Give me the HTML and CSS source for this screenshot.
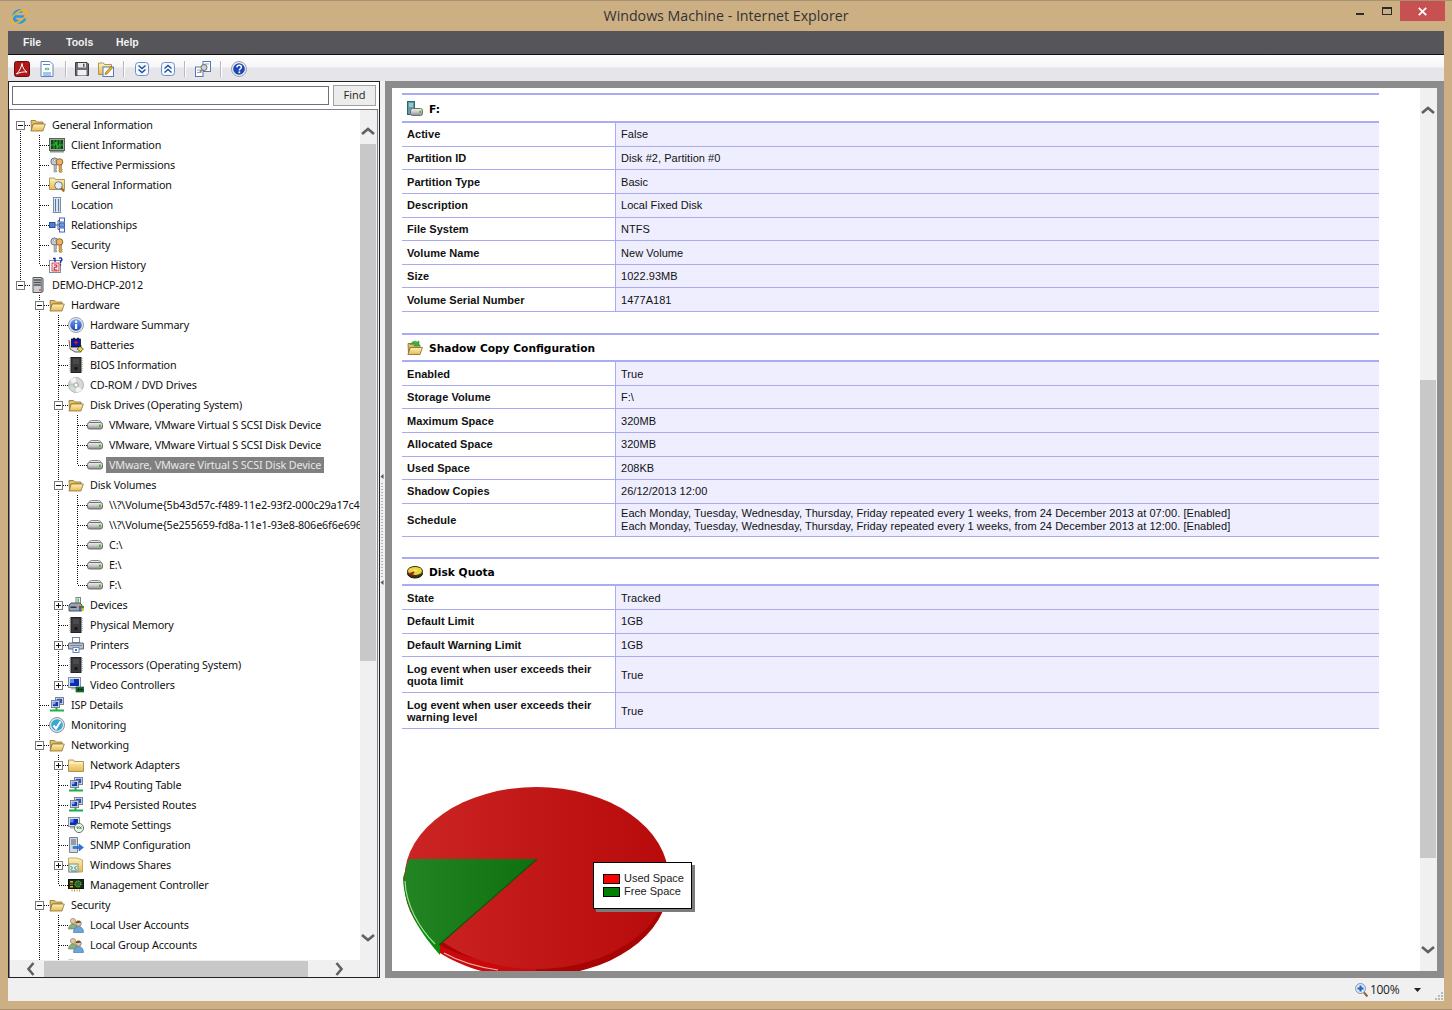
FILE: index.html
```html
<!DOCTYPE html>
<html lang="en">
<head>
<meta charset="utf-8">
<title>Windows Machine - Internet Explorer</title>
<link rel="stylesheet" href="styles.css">
</head>
<body>
<svg class="defs" width="0" height="0" aria-hidden="true">
  <defs>
    <linearGradient id="gFolder" x1="0" y1="0" x2="0" y2="1"><stop offset="0" stop-color="#fff2b8"/><stop offset="1" stop-color="#e8b850"/></linearGradient>
    <linearGradient id="gDisk" x1="0" y1="0" x2="0" y2="1"><stop offset="0" stop-color="#f2f2f2"/><stop offset=".5" stop-color="#c8c8c8"/><stop offset="1" stop-color="#8a8a8a"/></linearGradient>
    <linearGradient id="gBlue" x1="0" y1="0" x2="0" y2="1"><stop offset="0" stop-color="#6fa0ef"/><stop offset="1" stop-color="#1844b8"/></linearGradient>
    <linearGradient id="gPie" x1="0" y1="0" x2="1" y2="0"><stop offset="0" stop-color="#cc2424"/><stop offset="1" stop-color="#b80a0a"/></linearGradient>
    <linearGradient id="gGreen" x1="0" y1="0" x2="1" y2="0"><stop offset="0" stop-color="#238423"/><stop offset="1" stop-color="#0e700e"/></linearGradient>
    <symbol id="folderOpen" viewBox="0 0 16 16"><path d="M1 3.500h4.500l1.200 1.500H13v2H3L1.500 13z" fill="#e8c060" stroke="#8a7238" stroke-width=".8"/><path d="M3.300 7h12l-2.400 7H.9z" fill="url(#gFolder)" stroke="#8a7238" stroke-width=".8"/></symbol>
    <symbol id="folder" viewBox="0 0 16 16"><path d="M.5 3h5l1 1.500h9v10H.5z" fill="url(#gFolder)" stroke="#9a8240" stroke-width=".8"/><path d="M1 6h14" stroke="#fff6c8"/></symbol>
    <symbol id="client" viewBox="0 0 16 16"><rect x=".5" y="1.500" width="15" height="12" fill="#9aa89a" stroke="#58645a"/><rect x="2" y="3" width="12" height="9" fill="#0a4a14"/><path d="M2 8h4l1-3 1.500 6L10 8h4M5 3v9M8 3v9M11 3v9" stroke="#46d246" stroke-width=".7" fill="none"/><rect x="1" y="14" width="14" height="1.500" fill="#8a968a"/></symbol>
    <symbol id="keys" viewBox="0 0 16 16"><circle cx="5.500" cy="4.500" r="3.600" fill="#c8ccd0" stroke="#6c7078"/><circle cx="5.500" cy="3.500" r="1" fill="#fff" stroke="#6c7078" stroke-width=".5"/><path d="M5 8v7h2.500v-2H6.500v-1h1V8z" fill="#b8bcc0" stroke="#6c7078" stroke-width=".5"/><circle cx="10.500" cy="5" r="3.300" fill="#e8b468" stroke="#91642a"/><path d="M10 8v7l2 .5 1.500-1-1-1 1-1-1-1V8z" fill="#dc9c48" stroke="#91642a" stroke-width=".5"/></symbol>
    <symbol id="folderFind" viewBox="0 0 16 16"><path d="M.5 1h5l1 1.500h9v10H.5z" fill="url(#gFolder)" stroke="#9a8240" stroke-width=".8"/><circle cx="9.500" cy="8.500" r="3.800" fill="#e4eefa" stroke="#6a7888"/><path d="M12.200 11.300l3 3.200" stroke="#a06a28" stroke-width="2"/></symbol>
    <symbol id="location" viewBox="0 0 16 16"><path d="M4 .5h8l-.5 1v13l.5 1H4l.5-1v-13z" fill="#dfe8f4" stroke="#7a8ca4"/><path d="M6.500 2v12.500M9.500 2v12.500" stroke="#5878a8" stroke-width="1.100"/></symbol>
    <symbol id="rel" viewBox="0 0 16 16"><path d="M6 8h3M9 3.500v9M9 3.500h2M9 8h2M9 12.500h2" stroke="#586878" fill="none"/><rect x=".5" y="5.500" width="5.500" height="5" fill="#4a7ee0" stroke="#2a4e9c"/><rect x="10.500" y="1" width="5" height="4" fill="#fff" stroke="#3a64b8"/><rect x="10.500" y="6" width="5" height="4" fill="#6a9aee" stroke="#3a64b8"/><rect x="10.500" y="11" width="5" height="4" fill="#fff" stroke="#3a64b8"/></symbol>
    <symbol id="version" viewBox="0 0 16 16"><rect x=".5" y="3.500" width="11" height="12" fill="#fff" stroke="#7c8ca0"/><rect x="3" y="6" width="7" height="8" fill="#eef" stroke="#c00" stroke-width=".7"/><path d="M5 8h2.800v2.200H5.200V13h3" stroke="#c81010" fill="none"/><path d="M4 1.500h2V5M10 1.200c3-1 4 2 1.500 3.200V6M11.500 7.200v1.200" stroke="#1428a8" stroke-width="1.300" fill="none"/></symbol>
    <symbol id="server" viewBox="0 0 16 16"><path d="M3 .5h8.500l1.500 1v13l-1.500 1H3z" fill="#cfd0d4" stroke="#55565a"/><path d="M4 3h7.500M4 5.500h7.500M4 8h7.500" stroke="#4c4d52" stroke-width="1.300"/><rect x="9" y="12.500" width="2" height="1" fill="#d01010"/><path d="M11.500 1v14" stroke="#8a8b90" stroke-width="1.400"/></symbol>
    <symbol id="info" viewBox="0 0 16 16"><circle cx="8" cy="8" r="7.500" fill="#e6e9ee" stroke="#9aa0a8"/><circle cx="8" cy="8" r="5.800" fill="url(#gBlue)"/><rect x="7" y="7" width="2.200" height="5" fill="#fff"/><circle cx="8.100" cy="4.800" r="1.200" fill="#fff"/></symbol>
    <symbol id="battery" viewBox="0 0 16 16"><path d="M1 3l1 9 5 3h6V8" fill="#dcdcdc" stroke="#444" stroke-width=".8"/><rect x="3.500" y="2" width="9" height="8" fill="#0a18a8" stroke="#000" stroke-width=".7"/><rect x="5" y=".8" width="2" height="1.200" fill="#222"/><rect x="9" y=".8" width="2" height="1.200" fill="#222"/><path d="M8 3.500v4M6 5.500h4" stroke="#e81818" stroke-width="1.200"/><path d="M9 12l3-2.500 3.500 2.500-3 2.500z" fill="#e8e020" stroke="#444" stroke-width=".7"/></symbol>
    <symbol id="chip" viewBox="0 0 16 16"><rect x="3" y=".5" width="10" height="15" fill="#3a3a3c" stroke="#222"/><rect x="5" y="2" width="6" height="5" fill="#4a4a4e"/><rect x="6.500" y="10" width="3" height="3" fill="#17171a"/><path d="M1.500 1.500h1.500M1.500 3.500h1.500M1.500 5.500h1.500M1.500 7.500h1.500M1.500 9.500h1.500M1.500 11.500h1.500M1.500 13.500h1.500M13 1.500h1.500M13 3.500h1.500M13 5.500h1.500M13 7.500h1.500M13 9.500h1.500M13 11.500h1.500M13 13.500h1.500" stroke="#8a8a8a"/></symbol>
    <symbol id="cd" viewBox="0 0 16 16"><circle cx="8" cy="8" r="7.500" fill="#d8d8d8" stroke="#b4b4b4"/><path d="M8 8L2 3.500A7.500 7.500 0 0 1 8 .5zM8 8l6 4.500A7.500 7.500 0 0 1 8 15.500z" fill="#f4f4f4"/><path d="M8 8L1 6.500 1.200 9z" fill="#a8d8a8"/><circle cx="8" cy="8" r="2.200" fill="#fff" stroke="#9c9c9c"/></symbol>
    <symbol id="disk" viewBox="0 0 16 16"><path d="M2 6c0-1.500 1-2.500 2.500-2.500h7C13 3.500 14 4.500 14 6" fill="#e8e8e8" stroke="#8a8a8a"/><rect x=".5" y="5.500" width="15" height="6.500" rx="2" fill="url(#gDisk)" stroke="#6e6e6e"/><rect x="12" y="7.500" width="1.800" height="2.500" fill="#40c020"/></symbol>
    <symbol id="devices" viewBox="0 0 16 16"><rect x="8" y=".5" width="4.500" height="7" fill="#eee" stroke="#7a8a7a"/><rect x="9.500" y="1.500" width="1.500" height="4" fill="#68b868"/><path d="M1 8l2-2h9l2 2v6H1z" fill="#98a4b0" stroke="#48545e"/><rect x="2.500" y="9.500" width="6" height="1.500" fill="#2a3640"/><rect x="11" y="9" width="2.500" height="2.500" fill="#e02020"/><rect x="13.500" y="9" width="2.500" height="2.500" fill="#20a020"/><rect x="11" y="11.500" width="2.500" height="2.500" fill="#2060e0"/><rect x="13.500" y="11.500" width="2.500" height="2.500" fill="#f0c820"/></symbol>
    <symbol id="printer" viewBox="0 0 16 16"><rect x="4.500" y=".5" width="7" height="5" fill="#fff" stroke="#7888a0"/><path d="M1 6h14l.5 1v5h-15V7z" fill="#b8c0cc" stroke="#5c6878"/><rect x="2" y="8" width="12" height="1" fill="#7c8898"/><rect x="5" y="10.500" width="6" height="5" fill="#fff" stroke="#6a88b8"/><rect x="7" y="12" width="2" height="2" fill="#3a78d8"/></symbol>
    <symbol id="video" viewBox="0 0 16 16"><rect x=".5" y=".5" width="12" height="10" fill="#dfe3e8" stroke="#88909a"/><rect x="2" y="2" width="9" height="7" fill="#0c2cb4"/><path d="M2 2h4v4H2z" fill="#5c8cf0"/><rect x="3" y="11" width="7" height="1.500" fill="#b4bac0"/><rect x="8" y="10" width="8" height="5" fill="#147a3c" stroke="#0a4a24" stroke-width=".6"/><path d="M9 15.500h6" stroke="#d8c040" stroke-dasharray="1 1"/><rect x="9.500" y="11.500" width="2" height="2" fill="#111"/><rect x="12.500" y="11.500" width="2" height="2" fill="#111"/></symbol>
    <symbol id="network" viewBox="0 0 16 16"><rect x="6.500" y=".5" width="8" height="7" fill="#dce2ea" stroke="#7a8490"/><rect x="7.800" y="1.800" width="5.400" height="4.400" fill="#2a50c8"/><rect x="2.500" y="3.500" width="8" height="7" fill="#e4e8ee" stroke="#7a8490"/><rect x="3.800" y="4.800" width="5.400" height="4.400" fill="#1838b0"/><path d="M4 4.800h2.500v2.500H4z" fill="#80a8f0"/><path d="M7.500 10.500v2.500M1 13.500h14" stroke="#1eb04a" stroke-width="2"/></symbol>
    <symbol id="check" viewBox="0 0 16 16"><circle cx="8" cy="8" r="7.500" fill="#dfe6ea" stroke="#8c969e"/><circle cx="8" cy="8" r="5.800" fill="#38a8d0"/><path d="M4.500 8.500L7 11.500 11.500 4.500" stroke="#fff" stroke-width="2" fill="none"/></symbol>
    <symbol id="remote" viewBox="0 0 16 16"><rect x=".5" y=".5" width="11" height="9" fill="#dfe3e8" stroke="#88909a"/><rect x="2" y="2" width="8" height="6" fill="#0c2cb4"/><path d="M2 2h3.500v3.500H2z" fill="#5c8cf0"/><rect x="2" y="10" width="8" height="1.500" fill="#aeb4ba"/><circle cx="11" cy="11" r="4.600" fill="#eef2ee" stroke="#6c746c"/><path d="M8.500 10h2l-1 2M11.500 12l2-2.500M11.500 9.500l2 2.500" stroke="#1a9a2a" fill="none"/></symbol>
    <symbol id="snmp" viewBox="0 0 16 16"><path d="M1.500.5h8v15h-8z" fill="#d4dae2" stroke="#78828e"/><path d="M3 3h5M3 5h5M3 7h5" stroke="#546072"/><path d="M5 9.500h6V7l4.500 3.500L11 14v-2.500H5z" fill="#2a78e0" stroke="#1a58b0" stroke-width=".5"/></symbol>
    <symbol id="shares" viewBox="0 0 16 16"><path d="M.5 1h8l6 2v12H.5z" fill="url(#gFolder)" stroke="#b09a50" stroke-width=".8"/><rect x="1" y="7" width="9" height="8" fill="#e4ecdc" stroke="#6a88a0" stroke-width=".8"/><path d="M2.500 9l2 2-2 2M8.500 9l-2 2 2 2" stroke="#2a8a48" fill="none"/><path d="M3 14h6" stroke="#3a78c0"/></symbol>
    <symbol id="mgmt" viewBox="0 0 16 16"><rect x=".5" y="2.500" width="15" height="9" fill="#14301c" stroke="#0a180e"/><rect x="2" y="4" width="3" height="1.500" fill="#d8b820"/><rect x="2" y="6.500" width="3" height="1.500" fill="#d04020"/><rect x="2" y="9" width="3" height="1.500" fill="#d8b820"/><circle cx="10" cy="7" r="3" fill="#1a6a2c" stroke="#e0c820" stroke-dasharray="1 1"/><path d="M4 12.500v2M6.500 12.500v2M9 12.500v2M11.500 12.500v2" stroke="#c0a020"/></symbol>
    <symbol id="users" viewBox="0 0 16 16"><circle cx="5" cy="4" r="2.600" fill="#e8c8a0" stroke="#8a6e50" stroke-width=".6"/><path d="M.5 12c0-3 2-5 4.500-5s4.500 2 4.500 5z" fill="#8cb07c" stroke="#5c7a50" stroke-width=".6"/><circle cx="10.500" cy="6.500" r="2.800" fill="#e8c49c" stroke="#6e5238" stroke-width=".6"/><path d="M10.500 4c-2 0-2.500 1-2.500 2 1 0 3-.5 5-.3-.5-1-1.200-1.700-2.500-1.700z" fill="#5a4028"/><path d="M5.500 15.500c0-3.500 2-6 5-6s5 2.500 5 6z" fill="#6ca4dc" stroke="#3a6ea8" stroke-width=".6"/></symbol>
    <symbol id="driveInfo" viewBox="0 0 16 16"><rect x=".5" y=".5" width="7" height="13" fill="#5e9ca8" stroke="#2e6670"/><path d="M2 3h4M2 5h4" stroke="#d4eef2"/><rect x="3.500" y="7.500" width="12" height="7" rx="2" fill="url(#gDisk)" stroke="#6e6e6e"/><rect x="12.500" y="9.500" width="1.800" height="2.600" fill="#40c020"/></symbol>
    <symbol id="shadow" viewBox="0 0 16 16"><path d="M1 3.500h4.500l1 1.500H13v2.500H3L1.500 13z" fill="#e0be62" stroke="#7e6830" stroke-width=".8"/><path d="M3.300 7.500h12.200l-2.500 7H.9z" fill="url(#gFolder)" stroke="#7e6830" stroke-width=".8"/><path d="M3.500 4.500C5 1.500 8 .5 10.500 2L12 .8V6H7l1.500-1.500C7.200 3.600 5.500 3.800 3.500 4.500z" fill="#3cb43c" stroke="#1e7c1e" stroke-width=".5"/></symbol>
    <symbol id="quota" viewBox="0 0 16 16"><ellipse cx="8" cy="9.500" rx="7.500" ry="4.500" fill="#3c3014" stroke="#1a1608"/><ellipse cx="8" cy="7" rx="7.500" ry="4.500" fill="#e8d83c" stroke="#3a3210"/><path d="M8 7L1.500 9.200A7.500 4.500 0 0 0 6 11.300z" fill="#b02418"/><ellipse cx="8" cy="6.600" rx="2" ry="1" fill="#f4ec90"/></symbol>
  </defs>
</svg>

<div class="window">
  <header class="titlebar">
    <div class="title-left">
      <svg class="ie" viewBox="0 0 18 18"><circle cx="9.500" cy="9.500" r="5.600" fill="none" stroke="#2a96e4" stroke-width="3.200" stroke-dasharray="27 8" transform="rotate(18 9.500 9.500)"/><rect x="5" y="8.300" width="9.500" height="2.400" fill="#2a96e4"/><ellipse cx="9" cy="9.500" rx="9" ry="4.300" transform="rotate(-38 9 9.500)" fill="none" stroke="#f0b428" stroke-width="1.500"/></svg>
    </div>
    <div class="title-text">Windows Machine - Internet Explorer</div>
    <div class="win-controls">
      <span class="win-min"></span>
      <span class="win-max"></span>
      <span class="win-close"><svg viewBox="0 0 9 9" width="9" height="9"><path d="M.8.8l7.400 7.400M8.200.8L.8 8.200" stroke="#fff" stroke-width="1.800"/></svg></span>
    </div>
  </header>

  <nav class="menubar">
    <span class="menu-item m-file">File</span>
    <span class="menu-item m-tools">Tools</span>
    <span class="menu-item">Help</span>
  </nav>

  <div class="toolbar">
    <svg class="tb tb-pdf" viewBox="0 0 16 16"><rect x=".5" y=".5" width="15" height="15" rx="2" fill="#b01818" stroke="#6c0c0c"/><path d="M8 2.500c-.5 3-2.500 8-5.500 10.500 3-1.500 7-2.500 10.500-2-2.500-1-4.500-4.500-5-8.500z" fill="none" stroke="#fff" stroke-width="1"/></svg>
    <svg class="tb tb-doc" viewBox="0 0 14 16"><path d="M1 .5h9l3 3v12H1z" fill="#fff" stroke="#5a86b8"/><path d="M3 3.500h7M3 12h8M3 14h8" stroke="#4a8ad8"/><path d="M4.500 8l2-1.500v3zM9.500 8l-2-1.500v3z" fill="#2a9a5a"/></svg>
    <span class="tb-sep s1"></span>
    <svg class="tb tb-save" viewBox="0 0 14 14"><path d="M.5.500h11.500L13.500 2v11.500H.5z" fill="#6e6e72" stroke="#3e3e42"/><rect x="3" y="1" width="8" height="4.500" fill="#e8e8ec"/><rect x="8" y="1.800" width="1.500" height="3" fill="#55555a"/><rect x="2.500" y="8" width="9" height="5.500" fill="#f2f2f2"/></svg>
    <svg class="tb tb-edit" viewBox="0 0 16 16"><path d="M.5 2h5l1 1.500h7v10H.5z" fill="url(#gFolder)" stroke="#9a8240" stroke-width=".8"/><rect x="5" y="6" width="10.500" height="9.500" fill="#f8fbff" stroke="#5a7ab0"/><path d="M7 13.500l.5-2L13 5.500l1.500 1.500-5.500 6z" fill="#f0b020" stroke="#805a10" stroke-width=".6"/></svg>
    <span class="tb-sep s2"></span>
    <svg class="tb tb-exp" viewBox="0 0 14 14"><rect x=".5" y=".5" width="13" height="13" rx="3" fill="#f4f8ff" stroke="#6c90c0"/><path d="M3.500 3.500L7 6.500l3.500-3M3.500 7.500L7 10.500l3.500-3" fill="none" stroke="#1c4f9c" stroke-width="1.400"/></svg>
    <svg class="tb tb-col" viewBox="0 0 14 14"><rect x=".5" y=".5" width="13" height="13" rx="3" fill="#f4f8ff" stroke="#6c90c0"/><path d="M3.500 6.500L7 3.500l3.500 3M3.500 10.500L7 7.500l3.500 3" fill="none" stroke="#1c4f9c" stroke-width="1.400"/></svg>
    <span class="tb-sep s3"></span>
    <svg class="tb tb-find" viewBox="0 0 16 16"><rect x="8" y=".5" width="7.500" height="10" fill="#fff" stroke="#5878b0"/><rect x=".5" y="6" width="7.500" height="9.500" fill="#fff" stroke="#5878b0"/><path d="M9.500 3h4.500M2 9h4.500M2 11.500h4.500" stroke="#88a8d8"/><circle cx="9" cy="6.500" r="3" fill="#bcd8f4" stroke="#7a6840"/><path d="M6.800 9L5 11" stroke="#a87830" stroke-width="1.500"/></svg>
    <span class="tb-sep s4"></span>
    <svg class="tb tb-help" viewBox="0 0 16 16"><circle cx="8" cy="8" r="7.500" fill="#e8ecf2" stroke="#9ca4b0"/><circle cx="8" cy="8" r="5.800" fill="#1c46b8"/><path d="M5.800 6.300C6 4.800 7 4.200 8.200 4.200c1.400 0 2.200.9 2.200 2 0 1.500-2 1.700-2 3.200" fill="none" stroke="#fff" stroke-width="1.500"/><rect x="7.500" y="10.400" width="1.700" height="1.700" fill="#fff"/></svg>
  </div>

  <main class="main">
    <aside class="left">
      <form class="findbar">
        <input class="find-input" type="text" aria-label="Find">
        <button class="find-btn" type="button">Find</button>
      </form>
      <div class="tree-frame">
        <div class="tree">
          <div class="row"><i class="c d"><b class="box minus"></b></i><svg class="ic"><use href="#folderOpen"/></svg><span class="lbl">General Information</span></div>
          <div class="row"><i class="c v"></i><i class="c t"></i><svg class="ic"><use href="#client"/></svg><span class="lbl">Client Information</span></div>
          <div class="row"><i class="c v"></i><i class="c t"></i><svg class="ic"><use href="#keys"/></svg><span class="lbl">Effective Permissions</span></div>
          <div class="row"><i class="c v"></i><i class="c t"></i><svg class="ic"><use href="#folderFind"/></svg><span class="lbl">General Information</span></div>
          <div class="row"><i class="c v"></i><i class="c t"></i><svg class="ic"><use href="#location"/></svg><span class="lbl">Location</span></div>
          <div class="row"><i class="c v"></i><i class="c t"></i><svg class="ic"><use href="#rel"/></svg><span class="lbl">Relationships</span></div>
          <div class="row"><i class="c v"></i><i class="c t"></i><svg class="ic"><use href="#keys"/></svg><span class="lbl">Security</span></div>
          <div class="row"><i class="c v"></i><i class="c l"></i><svg class="ic"><use href="#version"/></svg><span class="lbl">Version History</span></div>
          <div class="row"><i class="c l"><b class="box minus"></b></i><svg class="ic"><use href="#server"/></svg><span class="lbl">DEMO-DHCP-2012</span></div>
          <div class="row"><i class="c"></i><i class="c t"><b class="box minus"></b></i><svg class="ic"><use href="#folderOpen"/></svg><span class="lbl">Hardware</span></div>
          <div class="row"><i class="c"></i><i class="c v"></i><i class="c t"></i><svg class="ic"><use href="#info"/></svg><span class="lbl">Hardware Summary</span></div>
          <div class="row"><i class="c"></i><i class="c v"></i><i class="c t"></i><svg class="ic"><use href="#battery"/></svg><span class="lbl">Batteries</span></div>
          <div class="row"><i class="c"></i><i class="c v"></i><i class="c t"></i><svg class="ic"><use href="#chip"/></svg><span class="lbl">BIOS Information</span></div>
          <div class="row"><i class="c"></i><i class="c v"></i><i class="c t"></i><svg class="ic"><use href="#cd"/></svg><span class="lbl">CD-ROM / DVD Drives</span></div>
          <div class="row"><i class="c"></i><i class="c v"></i><i class="c t"><b class="box minus"></b></i><svg class="ic"><use href="#folderOpen"/></svg><span class="lbl">Disk Drives (Operating System)</span></div>
          <div class="row"><i class="c"></i><i class="c v"></i><i class="c v"></i><i class="c t"></i><svg class="ic"><use href="#disk"/></svg><span class="lbl">VMware, VMware Virtual S SCSI Disk Device</span></div>
          <div class="row"><i class="c"></i><i class="c v"></i><i class="c v"></i><i class="c t"></i><svg class="ic"><use href="#disk"/></svg><span class="lbl">VMware, VMware Virtual S SCSI Disk Device</span></div>
          <div class="row"><i class="c"></i><i class="c v"></i><i class="c v"></i><i class="c l"></i><svg class="ic"><use href="#disk"/></svg><span class="lbl selected">VMware, VMware Virtual S SCSI Disk Device</span></div>
          <div class="row"><i class="c"></i><i class="c v"></i><i class="c t"><b class="box minus"></b></i><svg class="ic"><use href="#folderOpen"/></svg><span class="lbl">Disk Volumes</span></div>
          <div class="row"><i class="c"></i><i class="c v"></i><i class="c v"></i><i class="c t"></i><svg class="ic"><use href="#disk"/></svg><span class="lbl">\\?\Volume{5b43d57c-f489-11e2-93f2-000c29a17c4f}\</span></div>
          <div class="row"><i class="c"></i><i class="c v"></i><i class="c v"></i><i class="c t"></i><svg class="ic"><use href="#disk"/></svg><span class="lbl">\\?\Volume{5e255659-fd8a-11e1-93e8-806e6f6e6963}\</span></div>
          <div class="row"><i class="c"></i><i class="c v"></i><i class="c v"></i><i class="c t"></i><svg class="ic"><use href="#disk"/></svg><span class="lbl">C:\</span></div>
          <div class="row"><i class="c"></i><i class="c v"></i><i class="c v"></i><i class="c t"></i><svg class="ic"><use href="#disk"/></svg><span class="lbl">E:\</span></div>
          <div class="row"><i class="c"></i><i class="c v"></i><i class="c v"></i><i class="c l"></i><svg class="ic"><use href="#disk"/></svg><span class="lbl">F:\</span></div>
          <div class="row"><i class="c"></i><i class="c v"></i><i class="c t"><b class="box plus"></b></i><svg class="ic"><use href="#devices"/></svg><span class="lbl">Devices</span></div>
          <div class="row"><i class="c"></i><i class="c v"></i><i class="c t"></i><svg class="ic"><use href="#chip"/></svg><span class="lbl">Physical Memory</span></div>
          <div class="row"><i class="c"></i><i class="c v"></i><i class="c t"><b class="box plus"></b></i><svg class="ic"><use href="#printer"/></svg><span class="lbl">Printers</span></div>
          <div class="row"><i class="c"></i><i class="c v"></i><i class="c t"></i><svg class="ic"><use href="#chip"/></svg><span class="lbl">Processors (Operating System)</span></div>
          <div class="row"><i class="c"></i><i class="c v"></i><i class="c l"><b class="box plus"></b></i><svg class="ic"><use href="#video"/></svg><span class="lbl">Video Controllers</span></div>
          <div class="row"><i class="c"></i><i class="c t"></i><svg class="ic"><use href="#network"/></svg><span class="lbl">ISP Details</span></div>
          <div class="row"><i class="c"></i><i class="c t"></i><svg class="ic"><use href="#check"/></svg><span class="lbl">Monitoring</span></div>
          <div class="row"><i class="c"></i><i class="c t"><b class="box minus"></b></i><svg class="ic"><use href="#folderOpen"/></svg><span class="lbl">Networking</span></div>
          <div class="row"><i class="c"></i><i class="c v"></i><i class="c t"><b class="box plus"></b></i><svg class="ic"><use href="#folder"/></svg><span class="lbl">Network Adapters</span></div>
          <div class="row"><i class="c"></i><i class="c v"></i><i class="c t"></i><svg class="ic"><use href="#network"/></svg><span class="lbl">IPv4 Routing Table</span></div>
          <div class="row"><i class="c"></i><i class="c v"></i><i class="c t"></i><svg class="ic"><use href="#network"/></svg><span class="lbl">IPv4 Persisted Routes</span></div>
          <div class="row"><i class="c"></i><i class="c v"></i><i class="c t"></i><svg class="ic"><use href="#remote"/></svg><span class="lbl">Remote Settings</span></div>
          <div class="row"><i class="c"></i><i class="c v"></i><i class="c t"></i><svg class="ic"><use href="#snmp"/></svg><span class="lbl">SNMP Configuration</span></div>
          <div class="row"><i class="c"></i><i class="c v"></i><i class="c t"><b class="box plus"></b></i><svg class="ic"><use href="#shares"/></svg><span class="lbl">Windows Shares</span></div>
          <div class="row"><i class="c"></i><i class="c v"></i><i class="c l"></i><svg class="ic"><use href="#mgmt"/></svg><span class="lbl">Management Controller</span></div>
          <div class="row"><i class="c"></i><i class="c t"><b class="box minus"></b></i><svg class="ic"><use href="#folderOpen"/></svg><span class="lbl">Security</span></div>
          <div class="row"><i class="c"></i><i class="c v"></i><i class="c t"></i><svg class="ic"><use href="#users"/></svg><span class="lbl">Local User Accounts</span></div>
          <div class="row"><i class="c"></i><i class="c v"></i><i class="c t"></i><svg class="ic"><use href="#users"/></svg><span class="lbl">Local Group Accounts</span></div>
          <div class="row"><i class="c"></i><i class="c v"></i><i class="c t"></i><svg class="ic"><use href="#folder"/></svg></div>
        </div>
        <div class="vbar">
          <svg class="chev" viewBox="0 0 14 8"><path d="M1 7l6-5 6 5" fill="none" stroke="#606060" stroke-width="2.600"/></svg>
          <div class="vthumb vthumb-left"></div>
          <svg class="chev chev-end" viewBox="0 0 14 8"><path d="M1 1l6 5 6-5" fill="none" stroke="#606060" stroke-width="2.600"/></svg>
        </div>
        <div class="hbar">
          <svg class="chev-h" viewBox="0 0 8 14"><path d="M7 1L2 7l5 6" fill="none" stroke="#606060" stroke-width="2.600"/></svg>
          <div class="hthumb"></div>
          <svg class="chev-h chev-h-end" viewBox="0 0 8 14"><path d="M1 1l5 6-5 6" fill="none" stroke="#606060" stroke-width="2.600"/></svg>
        </div>
        <div class="corner"></div>
      </div>
    </aside>

    <div class="splitter">
      <svg width="5" height="112" viewBox="0 0 5 112"><path d="M3.500 0v5L.5 2.500z" fill="#555"/><path d="M2 9v94" stroke="#777" stroke-dasharray="1 2" fill="none"/><path d="M3.500 106v5L.5 108.500z" fill="#555"/></svg>
    </div>

    <section class="right">
      <div class="doc">
        <div class="content">
          <div class="sect sect-a">
            <h2 class="sect-head"><svg class="sect-ic"><use href="#driveInfo"/></svg>F:</h2>
            <div class="kv"><div class="k">Active</div><div class="val">False</div></div>
            <div class="kv"><div class="k">Partition ID</div><div class="val">Disk #2, Partition #0</div></div>
            <div class="kv"><div class="k">Partition Type</div><div class="val">Basic</div></div>
            <div class="kv"><div class="k">Description</div><div class="val">Local Fixed Disk</div></div>
            <div class="kv"><div class="k">File System</div><div class="val">NTFS</div></div>
            <div class="kv"><div class="k">Volume Name</div><div class="val">New Volume</div></div>
            <div class="kv"><div class="k">Size</div><div class="val">1022.93MB</div></div>
            <div class="kv"><div class="k">Volume Serial Number</div><div class="val">1477A181</div></div>
          </div>
          <div class="sect sect-b">
            <h2 class="sect-head"><svg class="sect-ic"><use href="#shadow"/></svg>Shadow Copy Configuration</h2>
            <div class="kv"><div class="k">Enabled</div><div class="val">True</div></div>
            <div class="kv"><div class="k">Storage Volume</div><div class="val">F:\</div></div>
            <div class="kv"><div class="k">Maximum Space</div><div class="val">320MB</div></div>
            <div class="kv"><div class="k">Allocated Space</div><div class="val">320MB</div></div>
            <div class="kv"><div class="k">Used Space</div><div class="val">208KB</div></div>
            <div class="kv"><div class="k">Shadow Copies</div><div class="val">26/12/2013 12:00</div></div>
            <div class="kv tall"><div class="k">Schedule</div><div class="val">Each Monday, Tuesday, Wednesday, Thursday, Friday repeated every 1 weeks, from 24 December 2013 at 07:00. [Enabled]<br>Each Monday, Tuesday, Wednesday, Thursday, Friday repeated every 1 weeks, from 24 December 2013 at 12:00. [Enabled]</div></div>
          </div>
          <div class="sect sect-c">
            <h2 class="sect-head"><svg class="sect-ic"><use href="#quota"/></svg>Disk Quota</h2>
            <div class="kv"><div class="k">State</div><div class="val">Tracked</div></div>
            <div class="kv"><div class="k">Default Limit</div><div class="val">1GB</div></div>
            <div class="kv"><div class="k">Default Warning Limit</div><div class="val">1GB</div></div>
            <div class="kv taller"><div class="k">Log event when user exceeds their quota limit</div><div class="val">True</div></div>
            <div class="kv taller"><div class="k">Log event when user exceeds their warning level</div><div class="val">True</div></div>
          </div>
          <div class="chart">
            <svg class="pie" viewBox="0 0 300 243" width="300" height="243">
              <ellipse cx="134.500" cy="156" rx="132" ry="91" fill="#a80404"/>
              <path d="M6 132L1 149C2 180 20 206 38 226L38 216z" fill="#0d8a0d"/>
              <path d="M38 216L38 224C70 244 110 250 134 250V236C95 236 62 230 38 216z" fill="#c80a0a"/>
              <ellipse cx="134.500" cy="149" rx="132" ry="91" fill="url(#gPie)"/>
              <path d="M135 130H7C3 139 3 146 3 149 3 173 15 197 37 216z" fill="url(#gGreen)"/>
              <path d="M135 130L37 216" stroke="#0a560a" stroke-width="1.200" fill="none"/>
              <path d="M3 152C4 176 17 199 33 215" stroke="#9be09b" stroke-width="1.200" fill="none"/>
              <path d="M42 224C58 233 76 238 96 241" stroke="#f6b0b0" stroke-width="1.200" fill="none"/>
            </svg>
            <div class="legend">
              <div class="leg-row"><span class="swatch sw-red"></span>Used Space</div>
              <div class="leg-row"><span class="swatch sw-green"></span>Free Space</div>
            </div>
          </div>
        </div>
        <div class="vbar vbar-right">
          <svg class="chev" viewBox="0 0 14 8"><path d="M1 7l6-5 6 5" fill="none" stroke="#606060" stroke-width="2.600"/></svg>
          <div class="vthumb vthumb-right"></div>
          <svg class="chev chev-end" viewBox="0 0 14 8"><path d="M1 1l6 5 6-5" fill="none" stroke="#606060" stroke-width="2.600"/></svg>
        </div>
      </div>
    </section>
  </main>

  <footer class="statusbar">
    <svg class="zoom-ic" viewBox="0 0 13 14"><circle cx="5.500" cy="5.500" r="5" fill="#dce8f8" stroke="#8a94a4"/><path d="M5.500 2.500v6M2.500 5.500h6" stroke="#1a64c8" stroke-width="2"/><path d="M9 9.500l3.500 4" stroke="#94602c" stroke-width="2"/></svg>
    <span class="zoom-val">100%</span>
    <svg class="zoom-arrow" viewBox="0 0 7 4"><path d="M0 0h7L3.500 4z" fill="#222"/></svg>
    <svg class="grip" viewBox="0 0 10 10"><path d="M7 1h2v2H7zM4 4h2v2H4zM7 4h2v2H7zM1 7h2v2H1zM4 7h2v2H4zM7 7h2v2H7z" fill="#b8b8b8"/></svg>
  </footer>
</div>
</body>
</html>
```

FILE: styles.css
```css
* { box-sizing: border-box; }
html, body { margin: 0; height: 100%; overflow: hidden; }
body { background: #ccaf83; font-family: "Liberation Sans", Arial, sans-serif; font-size: 11px; color: #000; }
.defs { display: block; height: 0; }

.window { height: 1010px; display: flex; flex-direction: column; padding: 0 8px 8px; border-top: 1px solid #a89070; border-bottom: 1px solid #a89070; }

.titlebar { height: 30px; flex: none; display: grid; grid-template-columns: 1fr auto 1fr; }
.title-left { padding: 6px 0 0 2px; }
.ie { width: 18px; height: 18px; display: block; }
.title-text { font-family: "Open Sans", sans-serif; font-size: 14.200px; color: #333; line-height: 30px; }
.win-controls { display: flex; justify-content: flex-end; margin-right: -1px; }
.win-min { width: 8px; height: 2px; background: #2a2a2a; margin: 12px 18px 0 0; }
.win-max { width: 10px; height: 8px; border: 1px solid #2a2a2a; border-top-width: 2px; margin: 6px 8px 0 0; }
.win-close { width: 45px; height: 20px; background: #c75050; display: flex; align-items: center; justify-content: center; }

.menubar { height: 24px; flex: none; background: #55555a; border-bottom: 1px solid #111; display: flex; align-items: center; padding: 0 0 1px 15px; color: #f2f2f2; font-weight: bold; font-size: 10.500px; }
.m-file { width: 43px; }
.m-tools { width: 50px; }

.toolbar { height: 26px; flex: none; background: linear-gradient(#fff 0, #f6f6f8 45%, #e5e5ea 52%, #e5e5ea 100%); display: flex; align-items: center; padding: 2px 0 0 6px; }
.tb { width: 16px; height: 16px; flex: none; display: block; }
.tb-doc { width: 14px; margin-left: 10px; }
.tb-sep { width: 1px; height: 16px; background: #b8b8c0; box-shadow: 1px 0 #fff; flex: none; }
.s1 { margin-left: 11px; }
.tb-save { width: 14px; height: 14px; margin-left: 9px; }
.tb-edit { margin-left: 9px; }
.s2 { margin-left: 9px; }
.tb-exp { width: 14px; height: 14px; margin-left: 11px; }
.tb-col { width: 14px; height: 14px; margin-left: 12px; }
.s3 { margin-left: 9px; }
.tb-find { margin-left: 10px; }
.s4 { margin-left: 9px; }
.tb-help { margin-left: 10px; }

.main { flex: 1; min-height: 0; display: flex; }
.left { width: 372px; flex: none; border: 1px solid #222; display: flex; flex-direction: column; background: #f0f0f0; }
.findbar { height: 27px; flex: none; display: flex; align-items: center; gap: 4px; padding: 0 0 0 3px; margin: 0; background: #fff; }
.find-input { width: 317px; height: 19px; border: 1px solid #707070; background: #fff; padding: 0; margin: 0; }
.find-btn { width: 43px; height: 21px; border: 1px solid #a0a0a0; background: #ececec; font-family: "Open Sans", sans-serif; font-size: 11px; color: #222; padding: 0 0 2px; margin: 0; }

.tree-frame { flex: 1; min-height: 0; margin-right: 1px; border: 1px solid #808090; border-bottom-width: 1px; display: grid; grid-template-columns: 350px 17px; grid-template-rows: 850px 17px; background: #fff; }
.tree { overflow: hidden; padding: 5px 0 0 1px; background: #fff; }
.row { height: 20px; display: flex; align-items: center; white-space: nowrap; }
.c { width: 19px; height: 20px; flex: none; display: flex; align-items: center; justify-content: flex-start; background-repeat: no-repeat; font-style: normal;
  --vd: repeating-linear-gradient(to bottom, #111 0 1px, transparent 1px 2px);
  --hd: repeating-linear-gradient(to right, #111 0 1px, transparent 1px 2px); }
.v { background-image: var(--vd); background-position: 9px 0; background-size: 1px 20px; }
.t { background-image: var(--vd), var(--hd); background-position: 9px 0, 10px 10px; background-size: 1px 20px, 9px 1px; }
.l { background-image: var(--vd), var(--hd); background-position: 9px 0, 10px 10px; background-size: 1px 10px, 9px 1px; }
.d { background-image: var(--vd), var(--hd); background-position: 9px 10px, 10px 10px; background-size: 1px 10px, 9px 1px; }
.box { width: 9px; height: 9px; margin-left: 5px; border: 1px solid #7a7a7a; background-color: #fff; background-repeat: no-repeat; }
.minus { background-image: linear-gradient(#111, #111); background-position: 1px 3px; background-size: 5px 1px; }
.plus { background-image: linear-gradient(#111, #111), linear-gradient(#111, #111); background-position: 1px 3px, 3px 1px; background-size: 5px 1px, 1px 5px; }
.ic { width: 16px; height: 16px; flex: none; display: block; }
.lbl { font-family: "Noto Sans", sans-serif; font-size: 10.800px; letter-spacing: -.15px; color: #111; margin-left: 3px; padding: 0 3px; height: 16px; line-height: 16px; }
.selected { background: #808080; color: #e8e8e8; }

.vbar { background: #f0f0f0; width: 17px; display: flex; flex-direction: column; align-items: flex-start; }
.chev { width: 14px; height: 8px; flex: none; display: block; margin: 17px 0 0 1px; }
.chev-end { margin-top: auto; margin-bottom: 18px; }
.vthumb { width: 16px; background: #c8c8c8; flex: none; }
.vthumb-left { height: 517px; margin-top: 9px; }
.hbar { background: #f0f0f0; display: flex; align-items: center; padding-left: 15px; }
.chev-h { width: 11px; height: 14px; flex: none; display: block; }
.hthumb { width: 264px; height: 16px; background: #c8c8c8; margin-left: 8px; flex: none; }
.chev-h-end { margin-left: 26px; }
.corner { background: #f0f0f0; }

.splitter { width: 5px; flex: none; background: #f0f0f0; display: flex; align-items: center; }

.right { flex: 1; min-width: 0; background: #8c8c8c; padding: 7px; }
.doc { height: 100%; background: #fff; display: flex; overflow: hidden; }
.content { flex: 1; min-width: 0; padding: 5px 0 0 10px; overflow: hidden; position: relative; }
.sect { width: 977px; }
.sect-a { margin-bottom: 21px; }
.sect-b { margin-bottom: 20.500px; }
.sect-head { margin: 0; height: 29.100px; border-top: 2px solid #aaaaf5; border-bottom: 2px solid #aaaaf5; display: flex; align-items: center; font-family: "DejaVu Sans", sans-serif; font-weight: bold; font-size: 10.650px; color: #000; padding: 1px 0 0 5px; }
.sect-a .sect-head { height: 30px; padding-top: 2px; }
.sect-ic { width: 16px; height: 16px; margin-right: 6px; display: block; flex: none; }
.kv { display: grid; grid-template-columns: 213px 1fr; height: 23.600px; border-bottom: 1px solid #aaaaf0; }
.sect-a .kv { height: 23.650px; }
.kv.tall { height: 33px; }
.kv.taller { height: 36px; }
.k { font-weight: bold; font-size: 11px; letter-spacing: .05px; color: #111; padding: 0 5px; display: flex; align-items: center; line-height: 12px; }
.val { background: #eeeeff; border-left: 1px solid #aaaaf0; padding: 0 5px; display: flex; align-items: center; font-size: 11px; letter-spacing: .045px; color: #111; line-height: 12px; }
.tall .val { display: block; padding-top: 3px; line-height: 13px; }

.chart { position: relative; width: 300px; height: 243px; }
.pie { display: block; }
.legend { position: absolute; left: 191px; top: 133px; width: 99px; height: 47px; background: #fff; border: 1px solid #000; box-shadow: 3px 3px 0 #7c7c7c; padding: 9px 0 0 9px; font-size: 11px; line-height: 13px; color: #222; }
.leg-row { display: flex; align-items: center; height: 13px; }
.swatch { width: 17px; height: 10px; border: 1px solid #000; margin-right: 4px; flex: none; }
.sw-red { background: #f00; }
.sw-green { background: #008000; }

.vbar-right { flex: none; }
.vbar-right .vthumb-right { height: 478px; margin-top: 266px; }
.vbar-right .chev { margin-top: 18px; }
.vbar-right .chev-end { margin-top: auto; margin-bottom: 17px; }

.statusbar { height: 23px; flex: none; background: #f0f0f0; display: flex; align-items: center; padding-left: 1347px; color: #222; }
.zoom-ic { width: 13px; height: 14px; flex: none; }
.zoom-val { font-family: "Open Sans", sans-serif; font-size: 12px; margin-left: 2px; width: 44px; letter-spacing: -.3px; }
.zoom-arrow { width: 7px; height: 4px; flex: none; }
.grip { width: 10px; height: 10px; flex: none; margin-left: 13px; align-self: flex-end; }
```
